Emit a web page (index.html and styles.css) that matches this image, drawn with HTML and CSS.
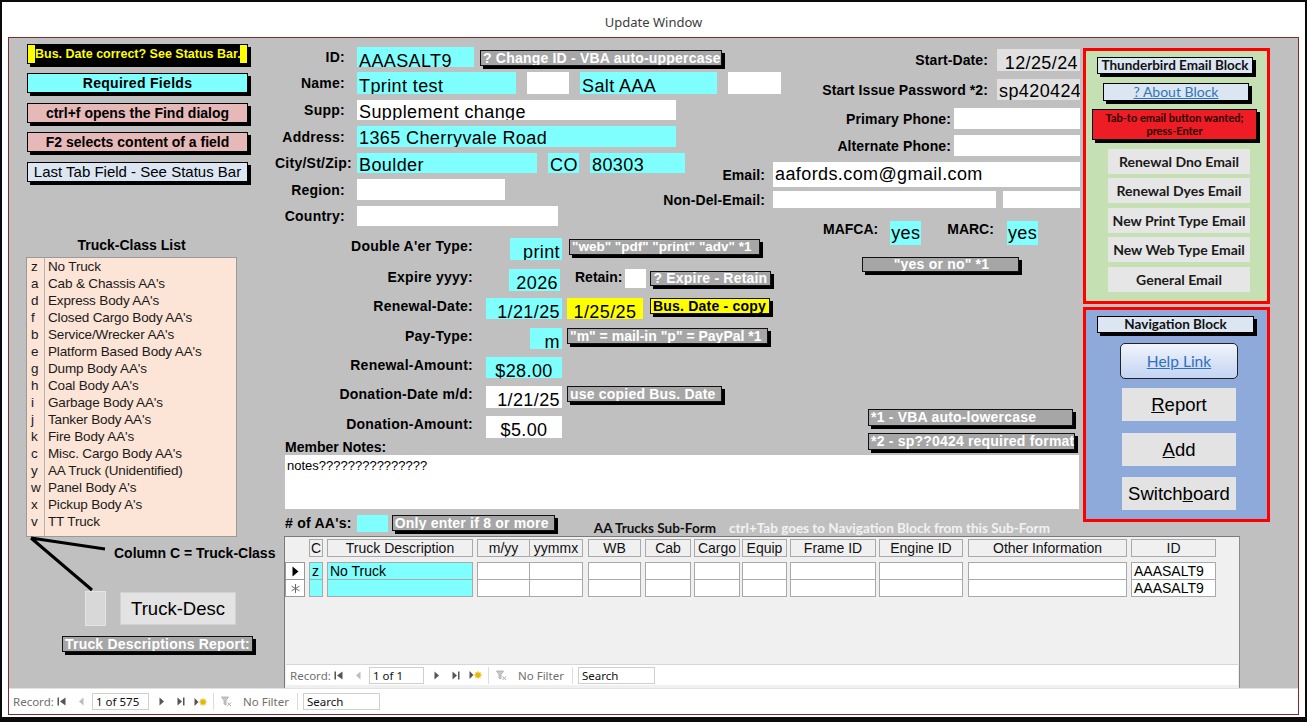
FILE: index.html
```html
<!DOCTYPE html>
<html>
<head>
<meta charset="utf-8">
<title>Update Window</title>
<link rel="stylesheet" href="styles.css">
</head>
<body>
<div class="window">
  <div class="titlebar">Update Window</div>
  <div class="frame">
    <div class="form">
      <div class="leftcol">
        <svg class="lines" width="266" height="650" viewBox="0 0 266 650"><path d="M22 500 L96 511 M22 500 L83 552" stroke="#000" stroke-width="3" fill="none"/></svg>
        <div class="lbtn bus"><span>Bus. Date correct? See Status Bar.</span></div>
        <div class="lbtn req">Required Fields</div>
        <div class="lbtn pink p1">ctrl+f opens the Find dialog</div>
        <div class="lbtn pink p2">F2 selects content of a field</div>
        <div class="lbtn lasttab">Last Tab Field - See Status Bar</div>
        <div class="tclhead">Truck-Class List</div>
        <div class="tclist">
          <div class="r"><span class="k">z</span><span class="t">No Truck</span></div>
          <div class="r"><span class="k">a</span><span class="t">Cab &amp; Chassis AA's</span></div>
          <div class="r"><span class="k">d</span><span class="t">Express Body AA's</span></div>
          <div class="r"><span class="k">f</span><span class="t">Closed Cargo Body AA's</span></div>
          <div class="r"><span class="k">b</span><span class="t">Service/Wrecker AA's</span></div>
          <div class="r"><span class="k">e</span><span class="t">Platform Based Body AA's</span></div>
          <div class="r"><span class="k">g</span><span class="t">Dump Body AA's</span></div>
          <div class="r"><span class="k">h</span><span class="t">Coal Body AA's</span></div>
          <div class="r"><span class="k">i</span><span class="t">Garbage Body AA's</span></div>
          <div class="r"><span class="k">j</span><span class="t">Tanker Body AA's</span></div>
          <div class="r"><span class="k">k</span><span class="t">Fire Body AA's</span></div>
          <div class="r"><span class="k">c</span><span class="t">Misc. Cargo Body AA's</span></div>
          <div class="r"><span class="k">y</span><span class="t">AA Truck (Unidentified)</span></div>
          <div class="r"><span class="k">w</span><span class="t">Panel Body A's</span></div>
          <div class="r"><span class="k">x</span><span class="t">Pickup Body A's</span></div>
          <div class="r"><span class="k">v</span><span class="t">TT Truck</span></div>
        </div>
        <div class="colc">Column C = Truck-Class</div>
        <div class="tdrow"><div class="sq"></div><div class="tdbtn">Truck-Desc</div></div>
        <div class="note tdnote">Truck Descriptions Report:</div>
      </div>

      <div class="main">
        <div class="center">
          <div class="fields">
            <div class="fieldsL">
              <div class="row trow r-id"><span class="lab tl">ID:</span><div class="tb cy lo ov w117 h20">AAASALT9</div><div class="note n-id">? Change ID - VBA auto-uppercase</div></div>
              <div class="row trow r-name"><span class="lab tl">Name:</span><div class="tb cy lo w159 h22">Tprint test</div><div class="tb w42 h22 g11"></div><div class="tb cy lo w137 h22 g11">Salt AAA</div><div class="tb w53 h22 g11"></div></div>
              <div class="row trow r-6"><span class="lab tl">Supp:</span><div class="tb w319 h20">Supplement change</div></div>
              <div class="row trow r-6"><span class="lab tl">Address:</span><div class="tb cy w319 h21">1365 Cherryvale Road</div></div>
              <div class="row trow r-6"><span class="lab tl">City/St/Zip:</span><div class="tb cy w180 h20">Boulder</div><div class="tb cy w31 h20 g11">CO</div><div class="tb cy w95 h20 g11">80303</div></div>
              <div class="row trow r-6"><span class="lab tl">Region:</span><div class="tb w148 h21"></div></div>
              <div class="row trow r-6"><span class="lab tl">Country:</span><div class="tb w201 h20"></div></div>

              <div class="row mrow r-dbl"><span class="lab ml">Double A'er Type:</span><div class="vals"><div class="tb cy lo ral w52 h22">print</div></div><div class="note n-dbl">"web" "pdf" "print" "adv" *1</div></div>
              <div class="row mrow r-exp"><span class="lab ml">Expire yyyy:</span><div class="vals"><div class="tb cy lo ral w51 h22 mr2">2026</div></div><span class="lab ret">Retain:</span><div class="tb w21 h19 retbox"></div><div class="note n-ret">? Expire - Retain</div></div>
              <div class="row mrow r-ren"><span class="lab ml">Renewal-Date:</span><div class="vals"><div class="tb cy lo ov ral w76 h21">1/21/25</div></div><div class="tb ye lo ov cal w76 h21 yb">1/25/25</div><div class="note ynote">Bus. Date - copy</div></div>
              <div class="row mrow r-pay"><span class="lab ml">Pay-Type:</span><div class="vals"><div class="tb cy lo ov ral w32 h21">m</div></div><div class="note n-pay">"m" = mail-in "p" = PayPal *1</div></div>
              <div class="row mrow r-8"><span class="lab ml">Renewal-Amount:</span><div class="vals"><div class="tb cy lo ov cal w76 h21">$28.00</div></div></div>
              <div class="row mrow r-8"><span class="lab ml">Donation-Date m/d:</span><div class="vals"><div class="tb lo ral w76 h22">1/21/25</div></div><div class="note n-dd">use copied Bus. Date</div></div>
              <div class="row mrow r-8"><span class="lab ml">Donation-Amount:</span><div class="vals"><div class="tb lo cal w76 h22">$5.00</div></div></div>
              <div class="lab mnotes">Member Notes:</div>
            </div>

            <div class="fieldsR">
              <div class="row rrow rr-start"><span class="lab g9r">Start-Date:</span><div class="tb gr lo ral w83 h22">12/25/24</div></div>
              <div class="row rrow rr-8"><span class="lab g9r">Start Issue Password *2:</span><div class="tb gr w83 h21">sp420424</div></div>
              <div class="row rrow rr-8"><span class="lab g3r">Primary Phone:</span><div class="tb w126 h21"></div></div>
              <div class="row rrow rr-6"><span class="lab g3r">Alternate Phone:</span><div class="tb w126 h21"></div></div>
              <div class="row rrow rr-6"><span class="lab g8r">Email:</span><div class="tb w307 h25">aafords.com@gmail.com</div></div>
              <div class="row rrow rr-4"><span class="lab g8r">Non-Del-Email:</span><div class="tb w223 h17"></div><div class="tb w77 h17 g7"></div></div>
              <div class="row maf"><span class="lab mlab">MAFCA:</span><div class="tb cy w31 h24 yes1">yes</div><span class="lab mlab marc">MARC:</span><div class="tb cy w31 h24 yes2">yes</div></div>
              <div class="note n-yn">"yes or no" *1</div>
              <div class="note n-1">*1 - VBA auto-lowercase</div>
              <div class="note n-2">*2 - sp??0424 required format</div>
            </div>
          </div>
          <div class="notesbox">notes???????????????</div>
        </div>

        <div class="blocks">
          <div class="tbblock">
            <div class="btitle tbt">Thunderbird Email Block</div>
            <div class="btitle about"><span>? About Block</span></div>
            <div class="redbox">Tab-to email button wanted;<br>press-Enter</div>
            <div class="ebtn e1">Renewal Dno Email</div>
            <div class="ebtn e2">Renewal Dyes Email</div>
            <div class="ebtn e3">New Print Type Email</div>
            <div class="ebtn e4">New Web Type Email</div>
            <div class="ebtn e5">General Email</div>
          </div>
          <div class="navblock">
            <div class="btitle nbt">Navigation Block</div>
            <div class="help"><span>Help Link</span></div>
            <div class="nbtn n1"><u>R</u>eport</div>
            <div class="nbtn n2"><u>A</u>dd</div>
            <div class="nbtn n3">Switch<u>b</u>oard</div>
          </div>
        </div>

        <div class="aarow">
          <span class="lab">#&nbsp;of AA's:</span>
          <div class="aabox"></div>
          <div class="note aanote">Only enter if 8 or more</div>
          <span class="sftitle">AA Trucks Sub-Form</span>
          <span class="sfhint">ctrl+Tab goes to Navigation Block from this Sub-Form</span>
        </div>

        <div class="subform">
          <div class="srow shead">
            <div class="c0"></div><div class="c1">C</div><div class="c2">Truck Description</div><div class="c3">m/yy</div><div class="c4">yymmx</div><div class="c5">WB</div><div class="c6">Cab</div><div class="c7">Cargo</div><div class="c8">Equip</div><div class="c9">Frame ID</div><div class="c10">Engine ID</div><div class="c11">Other Information</div><div class="c12">ID</div>
          </div>
          <div class="srow drow d1">
            <div class="c0"><svg width="7" height="11" viewBox="0 0 7 11"><path d="M0.5 0.5V10.5L6.5 5.5Z" fill="#000"/></svg></div><div class="c1">z</div><div class="c2">No Truck</div><div class="c3"></div><div class="c4"></div><div class="c5"></div><div class="c6"></div><div class="c7"></div><div class="c8"></div><div class="c9"></div><div class="c10"></div><div class="c11"></div><div class="c12">AAASALT9</div>
          </div>
          <div class="srow drow d2">
            <div class="c0"><svg width="11" height="11" viewBox="0 0 11 11"><path d="M5.5 1V10M1.6 3.2L9.4 7.8M9.4 3.2L1.6 7.8" stroke="#6a6a6a" stroke-width="1" fill="none"/></svg></div><div class="c1"></div><div class="c2"></div><div class="c3"></div><div class="c4"></div><div class="c5"></div><div class="c6"></div><div class="c7"></div><div class="c8"></div><div class="c9"></div><div class="c10"></div><div class="c11"></div><div class="c12">AAASALT9</div>
          </div>
          <div class="nav subnav">
            <span class="n-rec">Record:</span>
            <span class="n-first"><svg width="9" height="9" viewBox="0 0 9 9"><rect x="0.5" y="0.5" width="1.5" height="8" fill="#555"/><path d="M8.5 0.5V8.5L3 4.5Z" fill="#555"/></svg></span>
            <span class="n-prev"><svg width="6" height="9" viewBox="0 0 6 9"><path d="M5.5 0.5V8.5L1 4.5Z" fill="#bdbdbd"/></svg></span>
            <span class="n-box">1 of 1</span>
            <span class="n-next"><svg width="6" height="9" viewBox="0 0 6 9"><path d="M0.5 0.5V8.5L5 4.5Z" fill="#555"/></svg></span>
            <span class="n-last"><svg width="9" height="9" viewBox="0 0 9 9"><path d="M0.5 0.5V8.5L5 4.5Z" fill="#555"/><rect x="6" y="0.5" width="1.5" height="8" fill="#555"/></svg></span>
            <span class="n-new"><svg width="13" height="10" viewBox="0 0 13 10"><path d="M0.5 1V9L4.5 5Z" fill="#555"/><path d="M9 1.5V8.5M5.5 5H12.5M6.5 2.5L11.5 7.5M11.5 2.5L6.5 7.5" stroke="#e3b800" stroke-width="1.4"/></svg></span>
            <span class="n-sep"></span>
            <span class="n-filt"><svg width="11" height="11" viewBox="0 0 11 11"><path d="M0.5 1H7.5L5 4.5V9L3 8V4.5Z" fill="#c9c9c9" stroke="#a9a9a9" stroke-width="0.8"/><path d="M6.5 6.5L10 10M10 6.5L6.5 10" stroke="#a9a9a9" stroke-width="1"/></svg></span>
            <span class="n-nf">No Filter</span>
            <span class="n-sep"></span>
            <span class="n-search">Search</span>
          </div>
        </div>
      </div>
    </div>
    <div class="status">
      <div class="nav mainnav">
        <span class="n-rec">Record:</span>
        <span class="n-first"><svg width="9" height="9" viewBox="0 0 9 9"><rect x="0.5" y="0.5" width="1.5" height="8" fill="#555"/><path d="M8.5 0.5V8.5L3 4.5Z" fill="#555"/></svg></span>
        <span class="n-prev"><svg width="6" height="9" viewBox="0 0 6 9"><path d="M5.5 0.5V8.5L1 4.5Z" fill="#bdbdbd"/></svg></span>
        <span class="n-box">1 of 575</span>
        <span class="n-next"><svg width="6" height="9" viewBox="0 0 6 9"><path d="M0.5 0.5V8.5L5 4.5Z" fill="#555"/></svg></span>
        <span class="n-last"><svg width="9" height="9" viewBox="0 0 9 9"><path d="M0.5 0.5V8.5L5 4.5Z" fill="#555"/><rect x="6" y="0.5" width="1.5" height="8" fill="#555"/></svg></span>
        <span class="n-new"><svg width="13" height="10" viewBox="0 0 13 10"><path d="M0.5 1V9L4.5 5Z" fill="#555"/><path d="M9 1.5V8.5M5.5 5H12.5M6.5 2.5L11.5 7.5M11.5 2.5L6.5 7.5" stroke="#e3b800" stroke-width="1.4"/></svg></span>
        <span class="n-sep"></span>
        <span class="n-filt"><svg width="11" height="11" viewBox="0 0 11 11"><path d="M0.5 1H7.5L5 4.5V9L3 8V4.5Z" fill="#c9c9c9" stroke="#a9a9a9" stroke-width="0.8"/><path d="M6.5 6.5L10 10M10 6.5L6.5 10" stroke="#a9a9a9" stroke-width="1"/></svg></span>
        <span class="n-nf">No Filter</span>
        <span class="n-sep"></span>
        <span class="n-search">Search</span>
      </div>
    </div>
  </div>
</div>
</body>
</html>
```

FILE: styles.css
```css
* { box-sizing: border-box; margin: 0; padding: 0; }
html, body { width: 1307px; height: 722px; overflow: hidden; background: #fff; }
body { font-family: "Liberation Sans", Arial, sans-serif; color: #000; }

.window { width: 1307px; height: 722px; border: 2px solid #0a0a0a; border-bottom-width: 5px; background: #fff; display: flex; flex-direction: column; }
.titlebar { flex-shrink: 0; height: 35px; padding-top: 5px; text-align: center; font: 13px/30px "Noto Sans", sans-serif; color: #3c3c3c; }
.frame { flex-shrink: 0; margin: 0 6px; height: 678px; border: 1px solid #7e2d2d; display: flex; flex-direction: column; }
.form { flex-shrink: 0; height: 650px; background: #c0c0c0; display: grid; grid-template-columns: 266px 1fr; }

/* ---------- left column ---------- */
.leftcol { position: relative; padding-left: 18px; display: flex; flex-direction: column; align-items: flex-start; }
.lines { position: absolute; left: 0; top: 0; pointer-events: none; }
.lbtn { flex-shrink: 0; width: 221px; height: 20px; border: 1px solid #000; box-shadow: 3px 3px 0 #000; font: bold 14px/18px "Liberation Sans", Arial, sans-serif; text-align: center; white-space: nowrap; overflow: hidden; }
.bus { margin-top: 6px; background: #ffff00; padding: 0 7px; }
.bus span { display: block; height: 18px; background: #000; color: #ffff00; font-size: 12.5px; }
.req { margin-top: 9px; background: #80ffff; letter-spacing: .3px; }
.pink { background: #e6b8b7; }
.p1 { margin-top: 10px; }
.p2 { margin-top: 9px; }
.lasttab { margin-top: 10px; background: #dce6f2; font-weight: normal; font-size: 15px; }

.tclhead { flex-shrink: 0; margin-top: 55px; margin-left: -1px; width: 211px; text-align: center; font: bold 14px/16px "Liberation Sans", Arial, sans-serif; }
.tclist { flex-shrink: 0; margin-top: 4px; margin-left: -1px; width: 211px; height: 280px; border: 1px solid #9a9a9a; background-color: #fce4d6; background-image: linear-gradient(to right, transparent 17px, #b3b3b3 17px, #b3b3b3 18px, transparent 18px); color: #1a1a1a; }
.r { display: flex; height: 17px; font-size: 13.5px; line-height: 17px; white-space: nowrap; letter-spacing: -.15px; }
.k { width: 18px; padding-left: 4px; flex-shrink: 0; }
.t { padding-left: 3px; }

.colc { flex-shrink: 0; margin-top: 8px; margin-left: 87px; font: bold 14px/16px "Liberation Sans", Arial, sans-serif; white-space: nowrap; }
.tdrow { display: flex; align-items: flex-start; margin-top: 30px; margin-left: 58px; flex-shrink: 0; }
.sq { width: 21px; height: 35px; background: #d8d8d8; border: 1px solid #e4e4e4; }
.tdbtn { margin-left: 14px; margin-top: 1px; width: 116px; height: 33px; background: #e3e3e3; border: 1px solid #d2d2d2; font-size: 18.5px; line-height: 31px; text-align: center; }
.tdnote { margin-top: 10px; margin-left: 35px; width: 191px; }

/* ---------- notes (gray labels) ---------- */
.note { flex-shrink: 0; height: 16px; border: 1px solid #111; background: #a6a6a6; color: #fff; font: bold 14px/14px "Liberation Sans", Arial, sans-serif; padding-left: 2px; white-space: nowrap; overflow: hidden; box-shadow: 3px 3px 0 #000; letter-spacing: .2px; }

/* ---------- main grid ---------- */
.main { min-width: 0; display: grid; grid-template-columns: 808px 187px 1fr; grid-template-rows: 476px 22px 152px; }
.center { grid-column: 1; grid-row: 1; display: flex; flex-direction: column; }
.fields { display: flex; height: 417px; flex-shrink: 0; }
.fieldsL { width: 515px; display: flex; flex-direction: column; flex-shrink: 0; }
.fieldsR { width: 293px; padding-right: 3px; display: flex; flex-direction: column; flex-shrink: 0; }

.row { display: flex; flex-shrink: 0; }
.lab { flex-shrink: 0; font: bold 14px/16px "Liberation Sans", Arial, sans-serif; letter-spacing: .25px; white-space: nowrap; color: #000; }
.trow { align-items: center; }
.tl { width: 70px; text-align: right; margin-right: 12px; }
.mrow { align-items: flex-start; }
.ml { width: 198px; text-align: right; margin-right: 12px; }
.vals { flex-shrink: 0; width: 77px; display: flex; justify-content: flex-end; }
.rrow { justify-content: flex-end; align-items: center; }
.rrow .lab { letter-spacing: .1px; }

/* text boxes */
.tb { flex-shrink: 0; height: 20px; background: #fff; font: 18px/20px "Liberation Sans", Arial, sans-serif; letter-spacing: .4px; padding: 1.5px 2px 0; overflow: hidden; white-space: nowrap; color: #000; }
.lo { padding-top: 3.5px; }
.ov { overflow: visible; }
.cy { background: #80ffff; }
.ye { background: #ffff00; }
.gr { background: #e1e1e1; }
.ral { text-align: right; }
.cal { text-align: center; }
.h17 { height: 17px; } .h19 { height: 19px; } .h20 { height: 20px; } .h21 { height: 21px; }
.h22 { height: 22px; } .h24 { height: 24px; } .h25 { height: 25px; }
.w21 { width: 21px; } .w31 { width: 31px; } .w32 { width: 32px; } .w42 { width: 42px; }
.w51 { width: 51px; } .w52 { width: 52px; } .w53 { width: 53px; } .w76 { width: 76px; }
.w77 { width: 77px; } .w83 { width: 83px; } .w95 { width: 95px; } .w117 { width: 117px; }
.w126 { width: 126px; } .w137 { width: 137px; } .w148 { width: 148px; } .w159 { width: 159px; }
.w180 { width: 180px; } .w201 { width: 201px; } .w223 { width: 223px; } .w307 { width: 307px; }
.w319 { width: 319px; }
.g7 { margin-left: 7px; } .g11 { margin-left: 11px; } .mr2 { margin-right: 2px; }

/* left field rows */
.r-id { margin-top: 9px; }
.n-id { margin-left: 6px; width: 242px; align-self: flex-start; margin-top: 3px; }
.r-name { margin-top: 5px; }
.r-6 { margin-top: 6px; }
.r-dbl { margin-top: 12px; }
.n-dbl { margin-left: 7px; margin-top: 1px; width: 191px; font-size: 13.5px; letter-spacing: 0; }
.r-exp { margin-top: 9px; }
.ret { margin-left: 13px; letter-spacing: 0; }
.retbox { margin-left: 3px; }
.n-ret { margin-left: 4px; margin-top: 2px; width: 121px; height: 15px; line-height: 13px; }
.r-ren { margin-top: 7px; }
.yb { margin-left: 5px; }
.ynote { margin-left: 7px; width: 120px; background: #ffff00; color: #000; }
.r-pay { margin-top: 9px; }
.n-pay { margin-left: 5px; width: 201px; letter-spacing: 0; }
.r-8 { margin-top: 8px; }
.n-dd { margin-left: 5px; width: 155px; }
.mnotes { margin-top: 1px; margin-left: 10px; letter-spacing: 0; }

/* right field rows */
.rr-start { margin-top: 11px; }
.rr-8 { margin-top: 8px; }
.rr-6 { margin-top: 6px; }
.rr-4 { margin-top: 4px; }
.g9r { margin-right: 9px; }
.g3r { margin-right: 3px; }
.g8r { margin-right: 8px; }
.maf { margin-top: 13px; padding-left: 33px; align-items: flex-start; }
.mlab { margin-top: 0; letter-spacing: 0; }
.yes1 { margin-left: 12px; padding-left: 1px; }
.marc { margin-left: 26px; }
.yes2 { margin-left: 13px; padding-left: 1px; }
.n-yn { margin-top: 12px; margin-left: 72px; width: 157px; height: 15px; line-height: 13px; text-align: center; }
.n-1 { margin-top: 137px; margin-left: 78px; width: 205px; height: 17px; line-height: 15px; }
.n-2 { margin-top: 7px; margin-left: 78px; width: 207px; height: 17px; line-height: 15px; }

.notesbox { flex-shrink: 0; margin-left: 10px; width: 794px; height: 54px; background: #fff; font: 13px/15px "Liberation Sans", Arial, sans-serif; padding: 3px 2px; }

/* ---------- right blocks ---------- */
.blocks { grid-column: 2; grid-row: 1 / 3; padding-top: 10px; display: flex; flex-direction: column; }
.tbblock { flex-shrink: 0; height: 256px; border: 3px solid #ff0000; background: #c5e0b3; display: flex; flex-direction: column; align-items: flex-start; }
.btitle { flex-shrink: 0; height: 17px; border: 1px solid #000; background: #dce6f2; box-shadow: 3px 3px 0 #000; font: bold 13.5px/15px Lato, sans-serif; text-align: center; white-space: nowrap; color: #111; }
.tbt { margin-top: 6px; margin-left: 11px; width: 156px; }
.about { margin-top: 9px; margin-left: 17px; width: 146px; height: 18px; font-weight: normal; font-size: 14px; line-height: 16px; }
.about span { color: #2e75b6; text-decoration: underline; }
.redbox { flex-shrink: 0; margin-top: 8px; margin-left: 6px; width: 165px; height: 31px; background: #ee1c25; border: 1px solid #000; box-shadow: 3px 3px 0 #000; font: bold 11px/13px Lato, sans-serif; color: #2a0000; text-align: center; padding-top: 1px; white-space: nowrap; }
.ebtn { flex-shrink: 0; margin-left: 22px; width: 142px; height: 25px; background: #e6e6e6; font: bold 14px/25px Lato, sans-serif; text-align: center; color: #1a1a1a; white-space: nowrap; }
.e1 { margin-top: 9px; } .e2, .e4 { margin-top: 4px; } .e3, .e5 { margin-top: 5px; }
.navblock { flex-shrink: 0; margin-top: 3px; height: 215px; border: 3px solid #ff0000; background: #8eaadb; display: flex; flex-direction: column; align-items: flex-start; }
.nbt { margin-top: 6px; margin-left: 11px; width: 157px; }
.help { flex-shrink: 0; margin-top: 10px; margin-left: 34px; width: 118px; height: 36px; border: 1px solid #222; border-radius: 5px; background: linear-gradient(#f0f4fc, #c4d4f3); text-align: center; font: 15.5px/34px Lato, sans-serif; }
.help span { color: #2f6fbf; text-decoration: underline; }
.nbtn { flex-shrink: 0; margin-left: 36px; width: 114px; height: 33px; background: #e3e3e3; font: 18.5px/33px "Liberation Sans", Arial, sans-serif; text-align: center; }
.n1 { margin-top: 9px; } .n2 { margin-top: 12px; } .n3 { margin-top: 11px; }

/* ---------- sub-form ---------- */
.aarow { grid-column: 1; grid-row: 2; display: flex; align-items: flex-start; padding-left: 10px; padding-top: 1px; }
.aabox { flex-shrink: 0; margin-left: 5px; width: 31px; height: 17px; background: #80ffff; }
.aanote { margin-left: 4px; width: 163px; height: 16px; }
.sftitle { align-self: flex-end; margin-left: 39px; font: bold 13.5px/15px Lato, sans-serif; white-space: nowrap; color: #111; }
.sfhint { align-self: flex-end; margin-left: 13px; font: bold 13.5px/15px Lato, sans-serif; white-space: nowrap; color: #f2f2f2; }

.subform { grid-column: 1 / 4; grid-row: 3; margin-left: 9px; width: 956px; height: 152px; border-top: 1px solid #7a7a7a; border-left: 1px solid #7a7a7a; border-right: 1px solid #8a8a8a; background: #f0f0f0; display: flex; flex-direction: column; position: relative; }
.srow { display: flex; flex-shrink: 0; height: 18px; }
.srow > div { flex-shrink: 0; height: 18px; border: 1px solid #a9a9a9; font-size: 14px; line-height: 16px; white-space: nowrap; overflow: hidden; }
.shead { margin-top: 2px; }
.shead > div { background: #f0f0f0; text-align: center; color: #111; }
.shead .c0 { border: none; background: none; }
.d1 { margin-top: 5px; }
.d2 { margin-top: -1px; }
.drow > div { background: #fff; padding-left: 2px; }
.drow .c1, .drow .c2 { background: #80ffff; }
.drow .c0 { display: flex; align-items: center; justify-content: center; padding: 0; border-color: #9a9a9a; }
.c0 { width: 20px; }
.c1 { margin-left: 4px; width: 14px; }
.c2 { margin-left: 4px; width: 146px; }
.c3 { margin-left: 4px; width: 53px; }
.c4 { margin-left: -1px; width: 54px; }
.c5 { margin-left: 5px; width: 53px; }
.c6 { margin-left: 4px; width: 46px; }
.c7 { margin-left: 3px; width: 46px; }
.c8 { margin-left: 2px; width: 45px; }
.c9 { margin-left: 3px; width: 86px; }
.c10 { margin-left: 3px; width: 84px; }
.c11 { margin-left: 5px; width: 159px; }
.c12 { margin-left: 4px; width: 85px; }

/* ---------- record navigation bars ---------- */
.nav { display: flex; align-items: center; height: 21px; font: 11.5px/15px "Noto Sans", sans-serif; color: #6f6f6f; white-space: nowrap; flex-shrink: 0; }
.nav > span { flex-shrink: 0; display: flex; align-items: center; }
.n-rec { margin-left: 4px; width: 44px; }
.n-first { width: 21px; }
.n-prev { width: 14px; }
.n-box { width: 57px; height: 17px; border: 1px solid #cfcfcf; background: #fff; color: #111; padding-left: 3px; }
.n-next { margin-left: 10px; width: 18px; }
.n-last { width: 17px; }
.n-new { width: 19px; }
.n-sep { width: 1px; height: 17px; background: #dcdcdc; }
.n-filt { margin-left: 7px; width: 22px; }
.n-nf { width: 54px; }
.n-search { margin-left: 5px; width: 77px; height: 17px; border: 1px solid #cfcfcf; background: #fff; color: #111; padding-left: 3px; }
.subnav { margin-top: auto; margin-left: 1px; margin-bottom: 3px; width: 952px; background: #fff; border-top: 1px solid #d6d6d6; }
.subnav .n-box { width: 55px; }

.status { flex-shrink: 0; height: 26px; background: #fff; border-top: 1px solid #e2e2e2; display: flex; align-items: center; }
```
